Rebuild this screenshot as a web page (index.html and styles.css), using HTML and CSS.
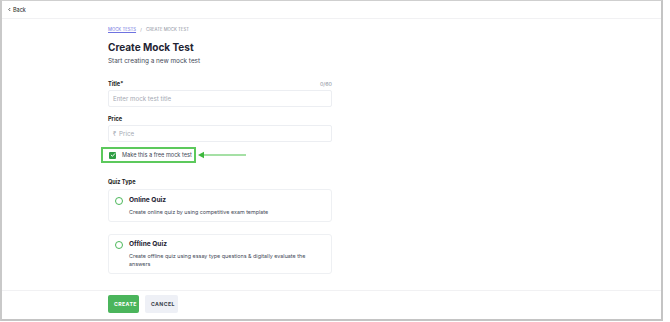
FILE: index.html
```html
<!doctype html>
<html lang="en">
  <head>
    <meta charset="UTF-8" />
    <meta name="viewport" content="width=device-width, initial-scale=1.0" />
    <title>Create Mock Test</title>
    <link rel="stylesheet" href="styles.css">
  </head>
  <body>
    <div class="frame">
      <div class="topbar">
        <a href="#" class="back">
          <svg viewBox="0 0 6 8" width="3" height="5">
            <path d="M4.5 1 L1.5 4 L4.5 7" fill="none" stroke="#222" stroke-width="1.4"/>
          </svg>
          Back
        </a>
      </div>

      <div class="content">
        <div class="breadcrumb">
          <a href="#">MOCK TESTS</a>
          <span class="sep">/</span>
          <span>CREATE MOCK TEST</span>
        </div>

        <h1>Create Mock Test</h1>
        <p class="subtitle">Start creating a new mock test</p>

        <div class="field">
          <div class="label-row">
            <label>Title*</label>
            <span class="count">0/60</span>
          </div>
          <div class="input">Enter mock test title</div>
        </div>

        <div class="field">
          <div class="label-row">
            <label>Price</label>
          </div>
          <div class="input"><span class="rupee">₹</span> Price</div>
        </div>

        <div class="free-row">
          <div class="highlight">
            <span class="checkbox">
              <svg viewBox="0 0 10 10" width="6" height="6">
                <path d="M2 5.2 L4.1 7.2 L8 2.8" fill="none" stroke="#fff" stroke-width="1.6" stroke-linecap="round" stroke-linejoin="round"/>
              </svg>
            </span>
            <span class="free-text">Make this a free mock test</span>
          </div>
          <svg class="arrow" viewBox="0 0 48 8" width="48" height="8">
            <line x1="4" y1="4" x2="48" y2="4" stroke="#4cc24c" stroke-width="1.2"/>
            <path d="M0 4 L6 0.8 L6 7.2 Z" fill="#3cb83c"/>
          </svg>
        </div>

        <div class="section-label">Quiz Type</div>

        <div class="quiz-card">
          <span class="radio"></span>
          <div>
            <div class="quiz-title">Online Quiz</div>
            <div class="quiz-desc">Create online quiz by using competitive exam template</div>
          </div>
        </div>

        <div class="quiz-card">
          <span class="radio"></span>
          <div>
            <div class="quiz-title">Offline Quiz</div>
            <div class="quiz-desc">Create offline quiz using essay type questions &amp; digitally evaluate the answers</div>
          </div>
        </div>
      </div>

      <div class="footer">
        <button class="btn btn-create">CREATE</button>
        <button class="btn btn-cancel">CANCEL</button>
      </div>
    </div>
  </body>
</html>
```

FILE: styles.css
```css
* {
  margin: 0;
  padding: 0;
  box-sizing: border-box;
}

body {
  font-family: Inter, "Noto Sans", sans-serif;
  background: #fff;
  color: #1f2433;
}

.frame {
  width: 663px;
  height: 321px;
  border-top: 1px solid #cfcfcf;
  border-left: 2px solid #c9c9c9;
  border-right: 2px solid #c4c4c4;
  border-bottom: 2px solid #c4c4c4;
  display: flex;
  flex-direction: column;
}

.topbar {
  height: 18px;
  border-bottom: 1px solid #f1f1f3;
  padding-left: 6px;
  display: flex;
  align-items: center;
}

.back {
  display: flex;
  align-items: center;
  gap: 2px;
  font-size: 5.5px;
  color: #222;
  text-decoration: none;
}

.content {
  flex: 1;
  width: 224px;
  margin-left: 106px;
  padding-top: 8px;
}

.breadcrumb {
  font-size: 4.3px;
  line-height: 6px;
  color: #8a8f9c;
}

.breadcrumb a {
  color: #6e72e0;
}

.breadcrumb .sep {
  margin: 0 3px;
}

h1 {
  font-size: 10px;
  line-height: 13px;
  font-weight: 700;
  margin-top: 8px;
  color: #1f2433;
}

.subtitle {
  font-size: 6.4px;
  line-height: 8px;
  color: #444a58;
  margin-top: 3px;
}

.field {
  margin-top: 15px;
}

.field + .field {
  margin-top: 8px;
}

.label-row {
  display: flex;
  justify-content: space-between;
  align-items: center;
  height: 8px;
}

.label-row label {
  font-size: 5.6px;
  font-weight: 700;
  color: #222;
}

.count {
  font-size: 5.4px;
  color: #8a8f9c;
}

.input {
  margin-top: 2px;
  height: 17px;
  border: 1px solid #eceef2;
  border-radius: 2px;
  padding-left: 4px;
  display: flex;
  align-items: center;
  font-size: 6.2px;
  color: #a5a9b3;
}

.rupee {
  margin-right: 3px;
  font-size: 5.6px;
}

.free-row {
  display: flex;
  align-items: center;
  margin-top: 5px;
  margin-left: -7px;
}

.highlight {
  width: 95px;
  height: 16px;
  border: 2px solid #5cc95c;
  display: flex;
  align-items: center;
  padding-left: 6px;
}

.checkbox {
  width: 7px;
  height: 7px;
  background: #2f9e44;
  border-radius: 1px;
  display: flex;
  align-items: center;
  justify-content: center;
}

.free-text {
  font-size: 5.6px;
  color: #444a58;
  margin-left: 6px;
}

.arrow {
  margin-left: 2px;
}

.section-label {
  font-size: 5.6px;
  line-height: 8px;
  font-weight: 700;
  color: #222;
  margin-top: 15px;
}

.quiz-card {
  margin-top: 3px;
  border: 1px solid #eef0f3;
  border-radius: 3px;
  padding: 5px 8px 5px 6px;
  display: flex;
  gap: 6px;
}

.quiz-card + .quiz-card {
  margin-top: 12px;
  padding-top: 4px;
}

.radio {
  flex: none;
  width: 8px;
  height: 8px;
  border: 1.2px solid #4cb85a;
  border-radius: 50%;
  margin-top: 1.5px;
}

.quiz-title {
  font-size: 6.6px;
  font-weight: 700;
  color: #1f2433;
  line-height: 11px;
}

.quiz-desc {
  font-size: 5.4px;
  color: #444a58;
  line-height: 8px;
  margin-top: 2px;
}

.footer {
  height: 29px;
  border-top: 1px solid #f1f1f3;
  padding-left: 106px;
  padding-top: 4px;
  display: flex;
  gap: 6px;
}

.btn {
  font-family: Inter, sans-serif;
  font-size: 5.2px;
  font-weight: 700;
  letter-spacing: 0.4px;
  height: 18px;
  border: none;
  border-radius: 2px;
  padding: 0 6px;
}

.btn-create {
  background: #4bb55c;
  color: #fff;
  width: 31px;
}

.btn-cancel {
  background: #eef0f6;
  color: #3a3f4c;
  width: 33px;
}
```
